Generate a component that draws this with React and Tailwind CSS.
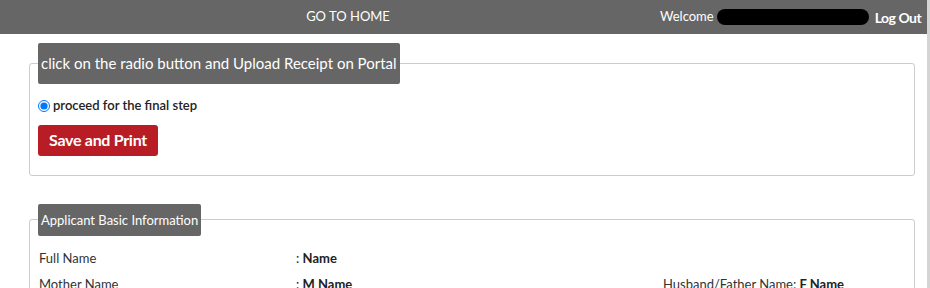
import React from "react";

const Row = ({ label, value, extraLabel, extraValue }) => (
  <div className="flex items-center h-[26px] text-[13px]">
    <div className="w-[257px] shrink-0 text-[#333]">{label}</div>
    <div className="w-[367px] shrink-0 text-[#222]">
      : <span className="font-bold">{value}</span>
    </div>
    {extraLabel && (
      <div className="text-[#333] whitespace-nowrap">
        {extraLabel}: <span className="font-bold text-[#222]">{extraValue}</span>
      </div>
    )}
  </div>
);

const App = () => {
  return (
    <div className="relative min-h-[288px] bg-white font-['Lato',sans-serif] overflow-hidden">
      {/* Top bar */}
      <header className="flex items-center h-[34px] bg-[#666666] text-white text-[13px] mr-[3px]">
        <div className="w-[660px] shrink-0 pl-[36px] flex justify-center">
          <a href="#" className="hover:underline">GO TO HOME</a>
        </div>
        <div className="flex items-center whitespace-nowrap">
          <span>Welcome</span>
          <span className="ml-[3px] w-[152px] h-[16px] rounded-full bg-black"></span>
          <a href="#" className="ml-[6px] font-bold text-[14px] tracking-[-0.5px]">Log Out</a>
        </div>
      </header>

      {/* right edge strip */}
      <div className="absolute top-0 right-0 w-[3px] h-full bg-[#d4d4d4]"></div>

      <main className="pl-[29px] pr-[15px]">
        {/* Final step */}
        <fieldset className="mt-[9px] border border-[#cccccc] rounded-[3px] pl-[8px] pr-[8px] pb-[19px]">
          <legend className="bg-[#666666] text-white text-[15px] leading-[21px] px-[3px] py-[10px] rounded-[2px]">
            click on the radio button and Upload Receipt on Portal
          </legend>
          <label className="flex items-center mt-[12px] text-[13px] font-semibold text-[#222]">
            <input type="radio" defaultChecked className="w-[12px] h-[12px] m-0 mr-[3px] accent-[#0075ff]" />
            proceed for the final step
          </label>
          <button className="mt-[9px] w-[120px] h-[31px] bg-[#b81c24] text-white font-bold text-[16px] tracking-[-0.3px] rounded-[3px]">
            Save and Print
          </button>
        </fieldset>

        {/* Applicant basic information */}
        <fieldset className="mt-[28px] border border-[#cccccc] rounded-[3px] pl-[8px] pr-[8px] pb-[16px]">
          <legend className="bg-[#666666] text-white text-[13px] leading-[18px] px-[3px] py-[7px] rounded-[2px]">
            Applicant Basic Information
          </legend>
          <div className="pt-[10px] pl-[1px]">
            <Row label="Full Name" value="Name" />
            <Row label="Mother Name" value="M Name" extraLabel="Husband/Father Name" extraValue="F Name" />
          </div>
        </fieldset>
      </main>
    </div>
  );
};

export default App;
